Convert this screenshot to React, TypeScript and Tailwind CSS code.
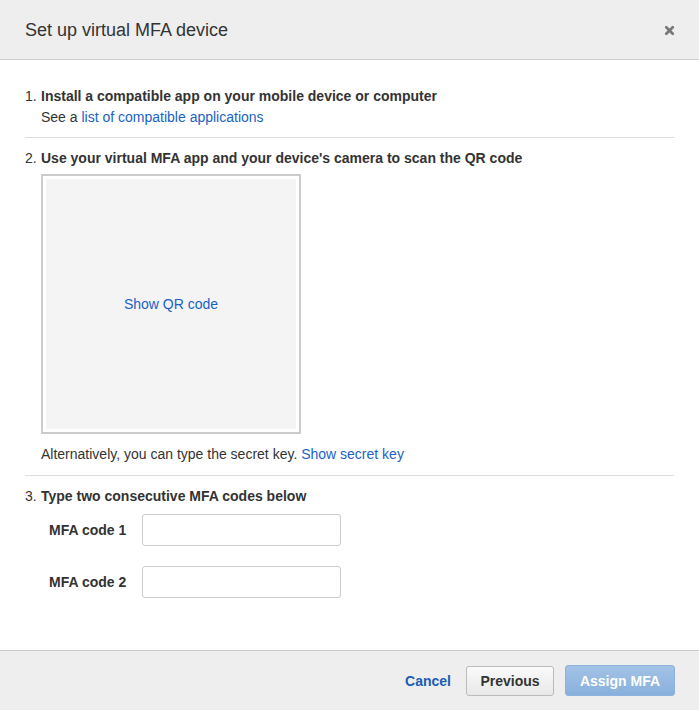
import { X } from 'lucide-react';

function Step({ n, title, children }: { n: number; title: string; children?: React.ReactNode }) {
  return (
    <div>
      <div className="flex leading-[20px] text-[14px] text-[#333]">
        <span className="w-4">{n}.</span>
        <span className="font-bold">{title}</span>
      </div>
      {children}
    </div>
  );
}

function CodeField({ label }: { label: string }) {
  return (
    <div className="flex items-center">
      <label className="w-[93px] text-[14px] font-bold text-[#333]">{label}</label>
      <input className="h-[32px] w-[199px] rounded-[3px] border border-[#ccc] bg-white px-2 text-[14px] outline-none" />
    </div>
  );
}

export default function App() {
  return (
    <div className="flex h-[710px] w-[699px] flex-col bg-white font-['Liberation_Sans',Arial,sans-serif] text-[#333]">
      <div className="flex h-[60px] shrink-0 items-center justify-between border-b border-[#ccc] bg-[#eeeeee] pl-[25px] pr-[23px]">
        <h1 className="mt-[2px] text-[18px] text-[#333]">Set up virtual MFA device</h1>
        <X size={13} strokeWidth={5} className="mt-[2px] text-[#777]" />
      </div>

      <div className="flex-1 px-[25px] pt-[26px]">
        <Step n={1} title="Install a compatible app on your mobile device or computer">
          <p className="mt-[1px] pl-4 text-[14px] leading-[20px]">
            See a <a className="text-[#1a62c4]">list of compatible applications</a>
          </p>
        </Step>

        <div className="mt-[10px] border-t border-[#ddd] pt-[10px]">
          <Step n={2} title="Use your virtual MFA app and your device's camera to scan the QR code">
            <div className="ml-4 mt-[6px] h-[260px] w-[260px] border-2 border-[#ccc] bg-white p-[3px]">
              <div className="flex h-full w-full items-center justify-center bg-[#f4f4f4]">
                <a className="text-[14px] text-[#1a62c4]">Show QR code</a>
              </div>
            </div>
            <p className="mt-[10px] pl-4 text-[14px] leading-[20px]">
              Alternatively, you can type the secret key. <a className="text-[#1a62c4]">Show secret key</a>
            </p>
          </Step>
        </div>

        <div className="mt-[11px] border-t border-[#ddd] pt-[10px]">
          <Step n={3} title="Type two consecutive MFA codes below">
            <div className="mt-[8px] flex flex-col gap-[20px] pl-6">
              <CodeField label="MFA code 1" />
              <CodeField label="MFA code 2" />
            </div>
          </Step>
        </div>
      </div>

      <div className="flex h-[60px] shrink-0 items-center justify-end gap-[15px] border-t border-[#ccc] bg-[#eeeeee] pr-[24px]">
        <a className="mt-[2px] text-[14px] font-bold text-[#1a5db3]">Cancel</a>
        <button className="h-[30px] w-[88px] rounded-[3px] border border-[#bbb] bg-gradient-to-b from-[#fafafa] to-[#e8e8e8] pt-[2px] text-[14px] font-bold text-[#333]">
          Previous
        </button>
        <button className="ml-[-4px] h-[31px] w-[110px] rounded-[3px] border border-[#8db3dd] bg-gradient-to-b from-[#a3c2e6] to-[#88b0dc] pt-[2px] text-[14px] font-bold text-white">
          Assign MFA
        </button>
      </div>
    </div>
  );
}
